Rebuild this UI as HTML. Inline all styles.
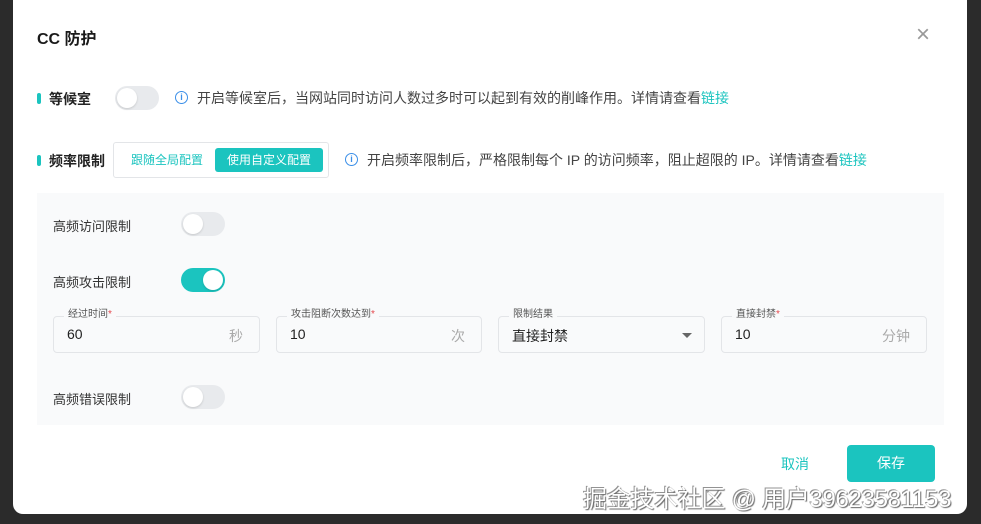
<!DOCTYPE html><html><head><meta charset="utf-8"><style>
body{margin:0;width:981px;height:524px;background:#2b2b2b;overflow:hidden;font-family:"Liberation Sans","Noto Sans CJK SC",sans-serif;position:relative}
.m{position:absolute;left:13px;top:-10px;width:954px;height:524px;background:#fff;border-radius:10px}
.a{position:absolute;white-space:nowrap}
.bar{position:absolute;width:4px;height:11px;background:#1bc4bf;border-radius:2px}
.tg{position:absolute;width:44px;height:24px;border-radius:12px;background:#e8eaed}
.tg::after{content:"";position:absolute;left:2px;top:2px;width:20px;height:20px;border-radius:50%;background:#fff;box-shadow:0 1px 2px rgba(0,0,0,.15)}
.tg.on{background:#1bc4bf}.tg.on::after{left:22px}
.info{position:absolute;width:11px;height:11px;border:1.3px solid #3b8fe8;border-radius:50%;color:#3b8fe8;font-size:9px;line-height:11px;text-align:center;font-weight:bold}
.inp{position:absolute;top:316px;height:35px;border:1px solid #e3e5e8;border-radius:4px;background:#f9fafb}
.lb{position:absolute;top:-9px;left:10px;padding:0 4px;background:#f9fafb;font-size:10px;color:#555;line-height:14px}
.lb i{color:#e5484d;font-style:normal}
.v{position:absolute;left:13px;top:9px;font-size:14px;color:#222}
.u{position:absolute;right:16px;top:9px;font-size:14px;color:#aaa}
.t{font-size:13px;color:#333}
</style></head><body>
<div class="m"></div>
<div class="a" style="left:37px;top:25px;font-size:16px;font-weight:bold;color:#1a1a1a">CC 防护</div>
<div class="a" style="left:916px;top:21px;font-size:24px;color:#999;font-weight:300">×</div>
<div class="bar" style="left:37px;top:93px"></div>
<div class="a" style="left:49px;top:89px;font-size:14px;font-weight:bold;color:#222">等候室</div>
<div class="tg" style="left:115px;top:86px"></div>
<div class="info" style="left:175px;top:91px">i</div>
<div class="a" style="left:197px;top:88px;font-size:14px;color:#444">开启等候室后，当网站同时访问人数过多时可以起到有效的削峰作用。详情请查看<span style="color:#1bc4bf">链接</span></div>
<div class="bar" style="left:37px;top:155px"></div>
<div class="a" style="left:49px;top:151px;font-size:14px;font-weight:bold;color:#222">频率限制</div>
<div class="a" style="left:113px;top:142px;width:214px;height:34px;border:1px solid #e3e5e8;border-radius:3px"></div>
<div class="a" style="left:131px;top:151px;font-size:12px;color:#1bc4bf">跟随全局配置</div>
<div class="a" style="left:215px;top:148px;width:108px;height:24px;background:#1bc4bf;border-radius:3px;color:#fff;font-size:12px;line-height:24px;text-align:center">使用自定义配置</div>
<div class="info" style="left:345px;top:153px">i</div>
<div class="a" style="left:367px;top:150px;font-size:14px;color:#444">开启频率限制后，严格限制每个 IP 的访问频率，阻止超限的 IP。详情请查看<span style="color:#1bc4bf">链接</span></div>
<div class="a" style="left:37px;top:193px;width:907px;height:232px;background:#f9fafb"></div>
<div class="a t" style="left:53px;top:216px">高频访问限制</div>
<div class="tg" style="left:181px;top:212px"></div>
<div class="a t" style="left:53px;top:272px">高频攻击限制</div>
<div class="tg on" style="left:181px;top:268px"></div>
<div class="inp" style="left:53px;width:205px"><div class="lb">经过时间<i>*</i></div><div class="v">60</div><div class="u">秒</div></div>
<div class="inp" style="left:276px;width:204px"><div class="lb">攻击阻断次数达到<i>*</i></div><div class="v">10</div><div class="u">次</div></div>
<div class="inp" style="left:498px;width:205px"><div class="lb">限制结果</div><div class="v">直接封禁</div><div style="position:absolute;right:12px;top:16px;border-left:5px solid transparent;border-right:5px solid transparent;border-top:5px solid #666"></div></div>
<div class="inp" style="left:721px;width:204px"><div class="lb">直接封禁<i>*</i></div><div class="v">10</div><div class="u">分钟</div></div>
<div class="a t" style="left:53px;top:389px">高频错误限制</div>
<div class="tg" style="left:181px;top:385px"></div>
<div class="a" style="left:781px;top:454px;font-size:14px;color:#1bc4bf">取消</div>
<div class="a" style="left:847px;top:445px;width:88px;height:37px;background:#1bc4bf;border-radius:4px;color:#fff;font-size:14px;line-height:37px;text-align:center">保存</div>
<div class="a" style="left:583px;top:479px;font-size:24px;color:#fff;text-shadow:1px 1px 1px #555,-1px -1px 0 #888;opacity:.9;letter-spacing:-0.3px">掘金技术社区 @ 用户39623581153</div>
</body></html>
